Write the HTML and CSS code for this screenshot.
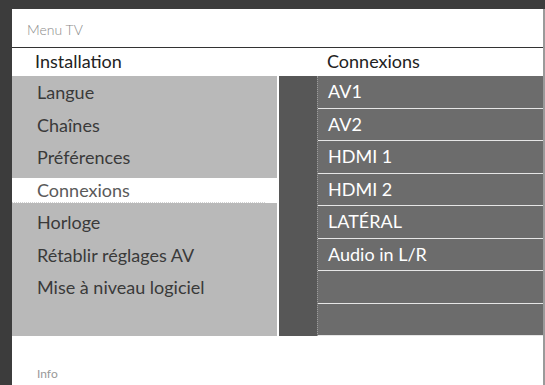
FILE: index.html
```html
<!DOCTYPE html>
<html lang="fr">
<head>
    <meta charset="UTF-8">
    <title>Menu TV</title>
    <link rel="stylesheet" href="styles.css">
</head>
<body>
<div class="frame">
    <div class="panel">
        <div class="title">Menu TV</div>
        <div class="head">
            <div class="head-left">Installation</div>
            <div class="head-right">Connexions</div>
        </div>
        <div class="lists">
            <ul class="menu">
                <li>Langue</li>
                <li>Chaînes</li>
                <li>Préférences</li>
                <li class="active"><span>Connexions</span></li>
                <li>Horloge</li>
                <li>Rétablir réglages AV</li>
                <li>Mise à niveau logiciel</li>
            </ul>
            <div class="strip"></div>
            <ul class="sub">
                <li>AV1</li>
                <li>AV2</li>
                <li>HDMI 1</li>
                <li>HDMI 2</li>
                <li>LATÉRAL</li>
                <li>Audio in L/R</li>
                <li></li>
                <li></li>
            </ul>
        </div>
        <div class="info">Info</div>
    </div>
</div>
</body>
</html>
```

FILE: styles.css
```css
html, body {
    margin: 0;
    padding: 0;
    height: 100%;
    overflow: hidden;
}

body {
    background: #3c3c3c;
    font-family: "Lato", "Open Sans", sans-serif;
}

.frame {
    height: 100%;
    padding: 9px 0 0 12px;
    box-sizing: border-box;
}

.panel {
    background: #fff;
    height: 100%;
    border-right: 2px solid #9a9a9a;
    display: flex;
    flex-direction: column;
}

.title {
    height: 38px;
    line-height: 41px;
    padding-left: 15px;
    font-size: 14px;
    font-weight: 300;
    color: #8a8a8a;
    border-bottom: 1px solid #333;
}

.head {
    display: flex;
    height: 28px;
    line-height: 27px;
    font-size: 18px;
    color: #222;
}

.head-left {
    width: 292px;
    padding-left: 23px;
}

.menu, .sub {
    list-style: none;
    margin: 0;
    padding: 0;
}

.lists {
    display: flex;
    height: 260px;
}

.menu {
    width: 265px;
    background: #b9b9b9;
    margin-right: 2px;
}

.menu li {
    height: 32.5px;
    line-height: 32px;
    padding-left: 25px;
    font-size: 18px;
    color: #3a3a3a;
}

.menu li.active {
    background: #fff;
    background-clip: content-box;
    padding: 4px 0 3px 0;
    height: 25.5px;
    line-height: 25px;
    color: #5a5a5a;
}

.menu li.active span {
    display: block;
    padding-left: 25px;
    border-bottom: 1px dotted #d2d2d2;
    margin-right: 12px;
    height: 24px;
}

.strip {
    width: 38px;
    background: #575757;
}

.sub {
    flex: 1;
    background: #6c6c6c;
    border-left: 1px dotted #9c9c9c;
}

.sub li {
    height: 31.5px;
    line-height: 30px;
    border-bottom: 1px solid #e6e6e6;
    padding-left: 10px;
    font-size: 18px;
    color: #fff;
}

.info {
    padding: 30px 0 0 25px;
    font-size: 12px;
    color: #999;
}
```
